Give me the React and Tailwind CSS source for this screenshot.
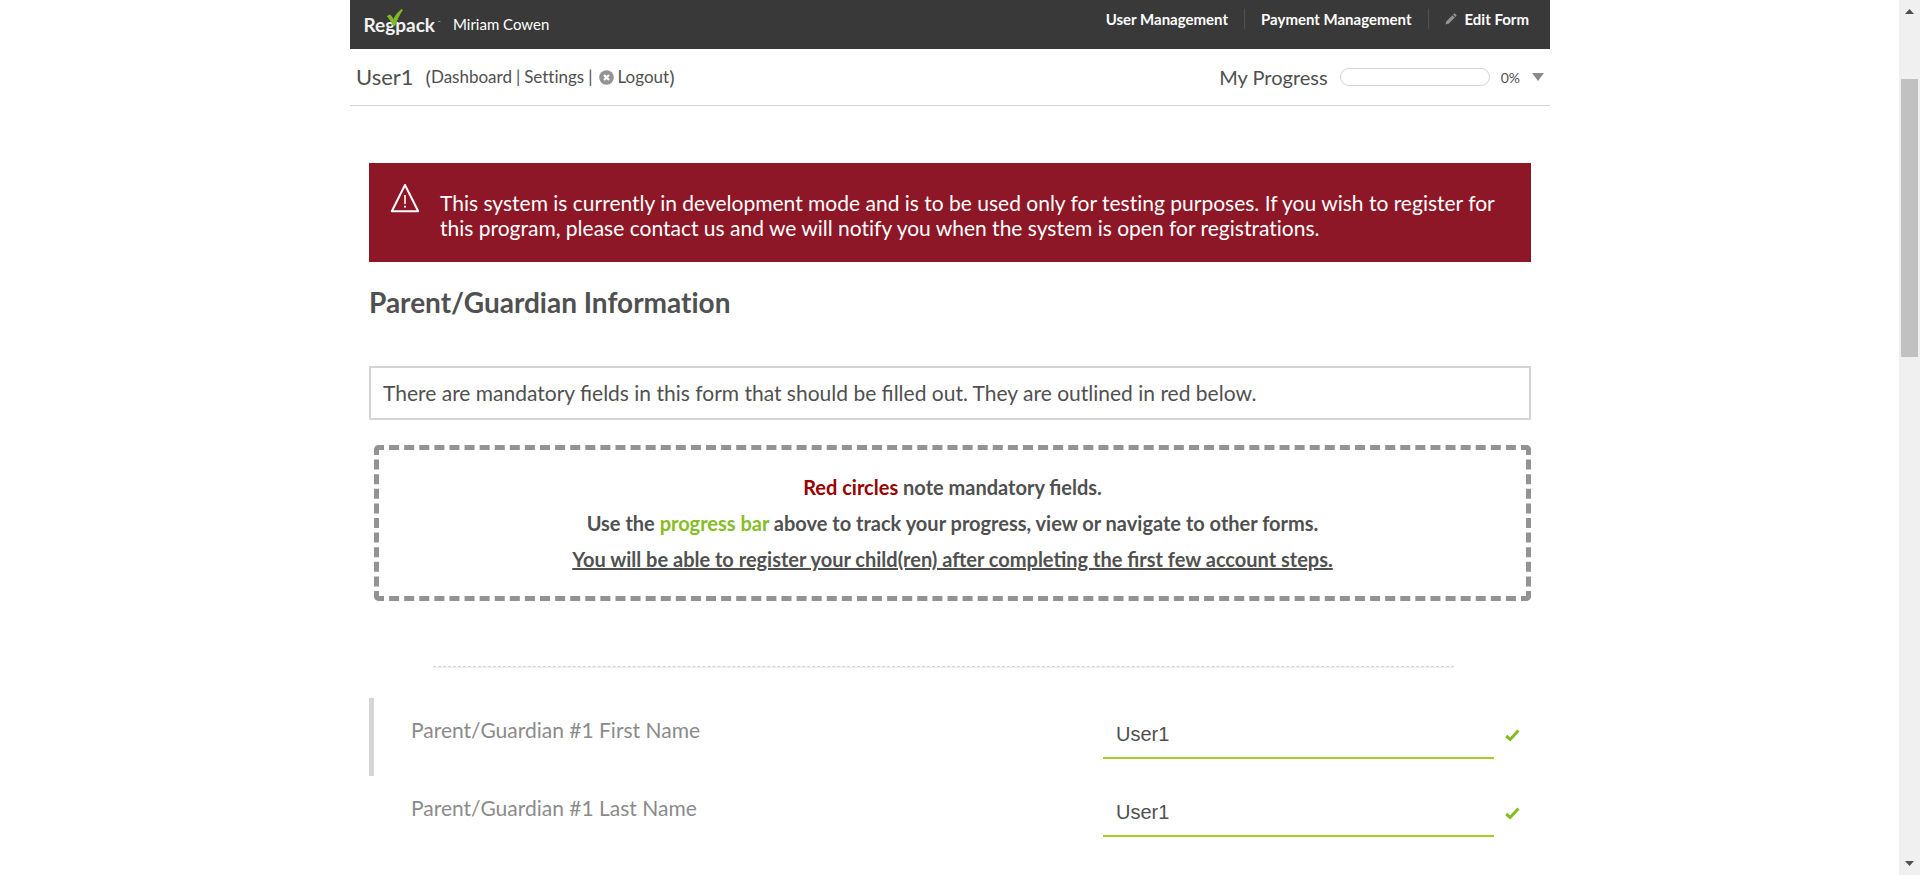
import React from "react";

function Logo() {
  return (
    <svg viewBox="0 0 78 34" className="h-[34px] w-[78px]" role="img" aria-label="Regpack">
      <text x="-0.5" y="25" fill="#f2f2f2" fontFamily="Lato, sans-serif" fontWeight="700" fontSize="19">
        Regpack
      </text>
      <path d="M23.4 9.4 C24.6 7.8 26.4 7.6 27.4 9.4 L29.4 12.8 C31.6 8.4 34 5 37.6 2.4 L38.4 3 C35.4 7.4 33 12.2 31 18.4 L29 18.4 C27.6 15 25.8 12 23.4 9.4 Z" fill="#84b923" stroke="#84b923" strokeWidth="0.9" />
      <path d="M74 14.5 h2.5" stroke="#8a8a8a" strokeWidth="1" />
    </svg>
  );
}

function Pencil() {
  return (
    <svg viewBox="0 0 12 12" className="h-3 w-3" aria-hidden="true">
      <path d="M0.5 11.5 L1.2 8.4 L7.4 2.2 L9.8 4.6 L3.6 10.8 Z M8.1 1.5 L9 0.6 Q9.6 0.2 10.2 0.8 L11.2 1.8 Q11.8 2.4 11.3 3.1 L10.5 3.9 Z" fill="#929292" />
    </svg>
  );
}

function CloseCircle() {
  return (
    <svg viewBox="0 0 15 15" className="h-[15px] w-[15px]" aria-hidden="true">
      <circle cx="7.5" cy="7.5" r="7.3" fill="#939393" />
      <path d="M5 5 L10 10 M10 5 L5 10" stroke="#fff" strokeWidth="2.2" />
    </svg>
  );
}

function Warning() {
  return (
    <svg viewBox="0 0 30 30" className="h-[30px] w-[30px] shrink-0" fill="none" aria-hidden="true">
      <path d="M15 2 L28.2 28.2 H1.8 Z" stroke="#fff" strokeWidth="2" strokeLinejoin="round" />
      <path d="M15 12 V21" stroke="#fff" strokeWidth="1.6" />
      <path d="M15 22.8 V24.6" stroke="#fff" strokeWidth="2" />
    </svg>
  );
}

function Check() {
  return (
    <svg viewBox="0 0 15 13" className="h-[13px] w-[15px]" fill="none" role="img" aria-label="Valid">
      <path d="M1.2 7 L5.2 10.4 L13.4 1.4" stroke="#82bc23" strokeWidth="3" />
    </svg>
  );
}

function Field({ id, label, active }) {
  return (
    <div className={active ? "flex h-[78px] border-l-5 border-[#d5d5d5] pl-[37px]" : "flex h-[78px] border-l-5 border-transparent pl-[37px]"}>
      <label htmlFor={id} className="flex-1 pt-[18px] text-[21px] leading-7 text-[#8b8b8b]">
        {label}
      </label>
      <div className="flex items-start gap-[11px] pr-[11px] pt-[11px]">
        <input
          id={id}
          type="text"
          defaultValue="User1"
          className="h-[50px] w-[391px] border-b-2 border-[#a5cd27] bg-transparent px-[13px] pt-0.5 font-['Liberation_Sans',Arial,sans-serif] text-[20px] text-[#505050] outline-none"
        />
        <span className="pt-5">
          <Check />
        </span>
      </div>
    </div>
  );
}

function Scrollbar() {
  return (
    <div className="flex w-[21px] shrink-0 flex-col items-center bg-[#f0f0f0]" aria-hidden="true">
      <svg viewBox="0 0 9 5" className="mt-[9px] h-[5px] w-[9px]">
        <path d="M0 5 L4.5 0 L9 5 Z" fill="#505050" />
      </svg>
      <div className="mt-[65px] h-[278px] w-[17px] bg-[#c1c1c1]" />
      <svg viewBox="0 0 9 5" className="mt-auto mb-[9px] h-[5px] w-[9px]">
        <path d="M0 0 L4.5 5 L9 0 Z" fill="#505050" />
      </svg>
    </div>
  );
}

export default function App() {
  return (
    <div className="flex min-h-screen bg-white font-[Lato,sans-serif] text-[#505050]">
      <div className="min-w-0 flex-1 pl-px">
        <div className="mx-auto max-w-[1200px]">
          <header className="flex h-[49px] items-start justify-between bg-[#393939] text-[15px] text-white">
            <div className="flex items-center gap-[11px] pl-3.5 pt-[7px]">
              <Logo />
              <span className="leading-8">Miriam Cowen</span>
            </div>
            <nav className="flex items-center pr-[21px] pt-[9px] font-bold leading-5">
              <a href="#users" className="pr-4">User Management</a>
              <a href="#payments" className="border-l border-[#505050] px-4">Payment Management</a>
              <a href="#edit" className="flex items-center gap-2 border-l border-[#505050] pl-4">
                <Pencil />
                Edit Form
              </a>
            </nav>
          </header>

          <div className="flex h-[57px] items-center justify-between border-b border-[#d5d5d5] px-1.5">
            <div className="flex items-center text-[17px] leading-7">
              <span className="pr-3 text-[22px]">User1</span>
              <span className="text-[20px]">(</span>
              <a href="#dashboard">Dashboard</a>
              <span className="px-1">|</span>
              <a href="#settings" className="[font-variant-ligatures:no-common-ligatures]">Settings</a>
              <span className="px-1">|</span>
              <a href="#logout" className="flex items-center gap-1 pl-0.5">
                <CloseCircle />
                Logout
              </a>
              <span className="text-[20px]">)</span>
            </div>
            <div className="flex items-center">
              <span className="pr-3 text-[20px]">My Progress</span>
              <div role="progressbar" aria-label="My Progress" aria-valuenow={0} className="h-[18px] w-[150px] rounded-full border border-[#d5d5d5]" />
              <span className="pl-[11px] text-[14px]">0%</span>
              <button type="button" aria-label="Show forms" className="pl-3">
                <svg viewBox="0 0 12 8" className="h-2 w-3">
                  <path d="M0 0 H12 L6 8 Z" fill="#8b8b8b" />
                </svg>
              </button>
            </div>
          </div>

          <main className="px-[19px] pt-[57px]">
            <div role="alert" className="flex gap-5 bg-[#8d1726] py-5 pl-[21px] pr-[30px] text-[21px] leading-[25px] text-white [font-variant-ligatures:no-common-ligatures]">
              <Warning />
              <p className="pb-0.5 pt-[7px]">
                This system is currently in development mode and is to be used only for testing purposes. If you wish to register for this program, please contact us and we will notify you when the system is open for registrations.
              </p>
            </div>

            <h1 className="pt-[22px] text-[28px] font-bold leading-9 [font-variant-ligatures:no-common-ligatures]">Parent/Guardian Information</h1>

            <p className="mt-[46px] border-2 border-[#d5d5d5] px-3 py-[11px] text-[21px] leading-7">
              There are mandatory fields in this form that should be filled out. They are outlined in red below.
            </p>

            <div className="ml-[5px] mt-[25px] rounded-[5px] border-5 border-dashed border-[#939393] py-[19px] text-center text-[20px] font-bold leading-9">
              <p><span className="text-[#990000]">Red circles</span> note mandatory fields.</p>
              <p>Use the <span className="text-[#86bc25]">progress bar</span> above to track your progress, view or navigate to other forms.</p>
              <p className="underline">You will be able to register your child(ren) after completing the first few account steps.</p>
            </div>

            <div className="ml-16 mr-[77px] mt-[65px] h-0.5 border-b border-t border-b-[#eeeeee] border-t-[#d5d5d5] [border-top-style:dashed]" />

            <form className="mt-[30px]">
              <Field id="first-name" label="Parent/Guardian #1 First Name" active />
              <Field id="last-name" label="Parent/Guardian #1 Last Name" />
            </form>
          </main>
        </div>
      </div>
      <Scrollbar />
    </div>
  );
}
